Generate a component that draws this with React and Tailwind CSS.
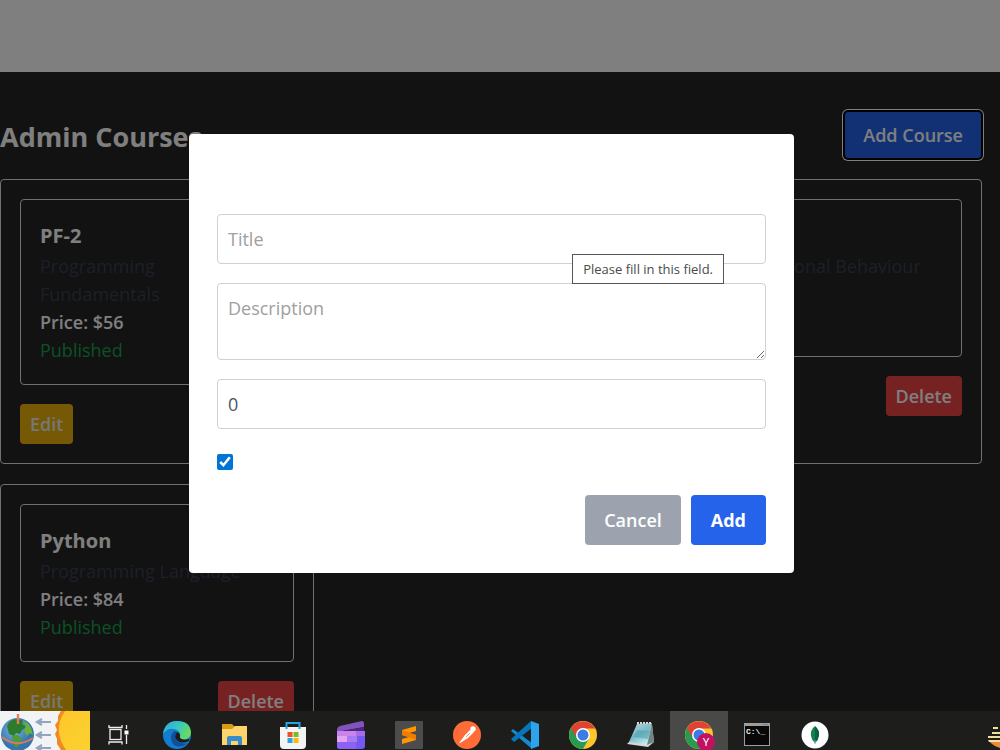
import { useState } from 'react'

const courses = [
  { id: 1, title: 'PF-2', description: 'Programming Fundamentals', price: '$56', status: 'Published' },
  { id: 2 },
  { id: 3, description: 'Organizational Behaviour' },
  { id: 4, title: 'Python', description: 'Programming Language', price: '$84', status: 'Published' },
]

function CourseCard({ course }) {
  return (
    <article className="rounded border border-[#e0e0e0] p-[19px]">
      <div className="min-h-[158px] rounded border border-[#e0e0e0] p-[19px]">
        <h2 className="h-[33px] text-[20px] leading-[33px] font-bold text-white">{course.title}</h2>
        <p className="text-[#374151]">{course.description}</p>
        {course.price && <p className="font-semibold text-white">Price: {course.price}</p>}
        {course.status && <p className="mb-px text-[#16a34a]">{course.status}</p>}
      </div>
      <div className="mt-[19px] flex justify-between">
        <button type="button" className="h-10 rounded bg-[#eab308] px-[10px] font-semibold text-[#eeeeee]">Edit</button>
        <button type="button" className="h-10 rounded bg-[#ef4444] px-[10px] font-semibold text-white">Delete</button>
      </div>
    </article>
  )
}

function AddCourseDialog() {
  const [title, setTitle] = useState('')
  const [description, setDescription] = useState('')
  const [price, setPrice] = useState('0')
  const [published, setPublished] = useState(true)

  const field = 'w-full rounded border border-[#d1d1d1] px-[10px] text-[#4b5563] placeholder:text-[#a0a0a0] outline-none'

  return (
    <form role="dialog" aria-label="Add course" className="w-full max-w-[605px] rounded bg-white p-7 pt-20" onSubmit={(e) => e.preventDefault()}>
      <div className="relative mb-[19px]">
        <input aria-label="Title" placeholder="Title" value={title} onChange={(e) => setTitle(e.target.value)} className={`${field} block h-[50px]`} />
        <div role="tooltip" className="absolute top-10 right-[42px] border border-[#555555] bg-white px-[10px] text-[13px] leading-7 whitespace-nowrap text-[#4a4a4a]">
          Please fill in this field.
        </div>
      </div>
      <textarea aria-label="Description" placeholder="Description" value={description} onChange={(e) => setDescription(e.target.value)} className={`${field} mb-[19px] block h-[77px] py-[10px]`} />
      <input aria-label="Price" inputMode="numeric" value={price} onChange={(e) => setPrice(e.target.value)} className={`${field} mb-[19px] block h-[50px]`} />
      <div className="mb-[19px] flex h-7 items-center">
        <input type="checkbox" aria-label="Published" checked={published} onChange={(e) => setPublished(e.target.checked)} className="size-4 accent-[#0075d7]" />
      </div>
      <div className="flex justify-end gap-[10px]">
        <button type="button" className="h-[50px] rounded bg-[#9ca3af] px-[19px] font-semibold text-white">Cancel</button>
        <button type="submit" className="h-[50px] rounded bg-[#2563eb] px-5 font-bold text-white">Add</button>
      </div>
    </form>
  )
}

function WeatherWidget() {
  return (
    <svg viewBox="0 0 90 39" className="h-[39px] w-[90px]">
      <defs>
        <radialGradient id="sea" cx="0.4" cy="0.35">
          <stop offset="0" stopColor="#79b8df" />
          <stop offset="1" stopColor="#3574ad" />
        </radialGradient>
        <linearGradient id="sun" x1="0" y1="0" x2="1" y2="1">
          <stop offset="0" stopColor="#ffc62b" />
          <stop offset="1" stopColor="#f9d22f" />
        </linearGradient>
      </defs>
      <rect width="90" height="39" fill="#f2f3f5" />
      <circle cx="17.5" cy="23.5" r="16.5" fill="url(#sea)" />
      <path d="M7 15 Q9 9 16 8 L23 9 22 13 26 16 22 19 20 23 16 22 14 25 9 23z" fill="#2f7b2c" />
      <path d="M22 9 Q29 12 31 17 L33 24 30 22 27 25 24 20 26 15z" fill="#6cb13c" />
      <path d="M12 25 L17 24 22 27 20 33 16 37 13 32z" fill="#4e9a3d" />
      <path d="M2 26 Q17 38 33 27" fill="none" stroke="#d87962" strokeWidth="2" />
      <path d="M18 3v10" stroke="#e77a61" strokeWidth="2.4" />
      <path d="M37 11h14M37 24h14M37 37h14M42 8l-5 3 5 3M42 21l-5 3 5 3M42 34l-5 3 5 3" fill="none" stroke="#91a5c1" strokeWidth="2.2" />
      <path d="M61 0 L58 5 58 10 55 14 57 19 55 23 57 28 57 33 61 39 H90 V0z" fill="#ef8b22" />
      <path d="M65 0 Q52 19 66 39 H90 V0z" fill="url(#sun)" />
    </svg>
  )
}

function TaskViewIcon() {
  return (
    <svg viewBox="0 0 28 28" className="size-7" fill="none" stroke="#eeeeee" strokeWidth="1.3">
      <rect x="5" y="8.5" width="11" height="10" />
      <path d="M4 4v2.500h13V4M4 23.500v-2.500h13v2.500M21.500 4v4M21.500 14v9" />
      <path d="M19.500 9.500h4v4h-4z" fill="#ffffff" stroke="none" />
    </svg>
  )
}

function EdgeIcon() {
  return (
    <svg viewBox="0 0 28 28" className="size-7">
      <defs>
        <linearGradient id="edgeTop" x1="0" y1="0" x2="1" y2="0.5">
          <stop offset="0" stopColor="#2da7dd" />
          <stop offset="0.55" stopColor="#35c7c4" />
          <stop offset="1" stopColor="#69db5c" />
        </linearGradient>
      </defs>
      <circle cx="14" cy="14" r="14" fill="#127dcf" />
      <path d="M0 13 Q2 0 14 0 Q27 0 28 11 Q28 18 21 18.500 Q15 18 17 15 Q18 11 13 8.500 Q5 6 0 13z" fill="url(#edgeTop)" />
      <path d="M11 10 Q5 17 11 24 Q17 28 25 22 Q18 24 14 19 Q11 15 14 11z" fill="#104f9a" />
      <path d="M14 11 Q10 16 15 20 Q19 23 26 20 Q27 18 26 18 Q20 20 17 17 Q18 14 16 12z" fill="#1c1c1b" />
    </svg>
  )
}

function FolderIcon() {
  return (
    <svg viewBox="0 0 28 28" className="size-7">
      <path d="M1 3h10l3 3h12v4H1z" fill="#d99b17" />
      <path d="M1 8h10l3-3h12v19H1z" fill="#fdd46b" />
      <path d="M6 24v-7q0-2 2-2h11q2 0 2 2v7h-4v-4h-7v4z" fill="#398bc9" />
    </svg>
  )
}

function StoreIcon() {
  return (
    <svg viewBox="0 0 28 28" className="size-7">
      <path d="M1 6h26v18q0 4-4 4H5q-4 0-4-4z" fill="#f4f4f4" />
      <path d="M7.500 8V2h13v6" fill="none" stroke="#24a5df" strokeWidth="2" />
      <path d="M8.500 11h5v5h-5z" fill="#e95325" />
      <path d="M14.500 11h5v5h-5z" fill="#7fb927" />
      <path d="M8.500 17h5v5h-5z" fill="#25a5e9" />
      <path d="M14.500 17h5v5h-5z" fill="#fbb913" />
    </svg>
  )
}

function ClipchampIcon() {
  return (
    <svg viewBox="0 0 28 28" className="size-7">
      <path d="M0 9 Q0 6 3 5 L25 0 Q27 0 27 3 L27 6 0 11z" fill="#8253ba" />
      <path d="M6 10 27 6v4z" fill="#4c2586" />
      <path d="M0 10h28v15q0 3-3 3H3q-3 0-3-3z" fill="#7558f0" />
      <path d="M0 10h19v5H0z" fill="#c983ed" />
      <path d="M0 15h10v6H0z" fill="#e4a2f4" />
      <path d="M10 15h10v6H10z" fill="#a77af2" />
      <path d="M0 21h19v7H3q-3 0-3-3z" fill="#8c62f2" />
      <path d="M19 10h9v5h-9z" fill="#a56de5" />
    </svg>
  )
}

function SublimeIcon() {
  return (
    <svg viewBox="0 0 28 28" className="size-7">
      <rect width="28" height="28" rx="1" fill="#4c4c4c" />
      <path d="M7 9 21 5v5l-7 2 7 2v5L7 23v-5l7-2-7-2z" fill="#ff9800" />
      <path d="M7 9v5l14 5v-5z" fill="#f17c00" />
    </svg>
  )
}

function PostmanIcon() {
  return (
    <svg viewBox="0 0 28 28" className="size-7">
      <circle cx="14" cy="14" r="14" fill="#ff6c37" />
      <circle cx="20" cy="8" r="2.700" fill="#ffffff" />
      <path d="M17 9 21 11 15 17 7 22 6 22 12 14z" fill="#ffffff" />
      <path d="M13 16 17 12" stroke="#ff9a75" strokeWidth="1" />
    </svg>
  )
}

function VsCodeIcon() {
  return (
    <svg viewBox="0 0 28 28" className="size-7">
      <path d="M2 8 21 22 21 28 0 10z" fill="#1389d0" />
      <path d="M0 18 20 0 21 7 3 21z" fill="#0874b9" />
      <path d="M20 0 28 3v22l-8 3z" fill="#2ba4ed" />
    </svg>
  )
}

function ChromeIcon({ badge }) {
  return (
    <svg viewBox="0 0 28 28" className="size-7 overflow-visible">
      <circle cx="14" cy="14" r="14" fill="#fbc62d" />
      <path d="M1.900 7 A14 14 0 0 0 14 28 L20 17.500 14 14 14 7z" fill="#279b51" />
      <path d="M14 7.500H26.100A14 14 0 0 0 1.900 7L8 17 9 11z" fill="#df4335" />
      <circle cx="14" cy="14" r="7" fill="#ffffff" />
      <circle cx="14" cy="14" r="5.500" fill="#397be7" />
      {badge && (
        <>
          <circle cx="21" cy="21" r="9" fill="#c31162" />
          <text x="21" y="25" textAnchor="middle" fontSize="11" fontFamily="Roboto, sans-serif" fill="#ffffff">{badge}</text>
        </>
      )}
    </svg>
  )
}

function NotepadIcon() {
  return (
    <svg viewBox="0 0 28 28" className="size-7">
      <defs>
        <linearGradient id="note" x1="0.2" y1="0" x2="0.7" y2="1">
          <stop offset="0" stopColor="#b5d5da" />
          <stop offset="0.5" stopColor="#75b9c6" />
          <stop offset="1" stopColor="#cfeff3" />
        </linearGradient>
      </defs>
      <path d="M25 4 27 21 21 26 0 23 2 21z" fill="#d5d8d8" />
      <path d="M10 3 25 2 20 24 2 21z" fill="url(#note)" />
      <path d="M10 9 23 10 21 18 6 16z" fill="#4b9bae" opacity="0.5" />
      <path d="M10 2h15" stroke="#d8d8d8" strokeWidth="2" strokeDasharray="2 1" />
      <path d="M25 3 27 21 20 24z" fill="#6f8587" />
    </svg>
  )
}

function TerminalIcon() {
  return (
    <svg viewBox="0 0 28 28" className="size-7">
      <path d="M1 2h26v23H1z" fill="#9c9c9c" />
      <path d="M2 5h24v19H2z" fill="#080808" />
      <path d="M20 3.500h5" stroke="#6989aa" strokeWidth="1" />
      <text x="3" y="13" fontSize="8" fontFamily="Liberation Mono, monospace" fontWeight="700" fill="#eeeeee">C:\_</text>
    </svg>
  )
}

function MongoIcon() {
  return (
    <svg viewBox="0 0 28 28" className="size-7">
      <circle cx="14" cy="14" r="13.500" fill="#ffffff" />
      <path d="M14 5 Q9 9 10 15 Q10.500 19 14 22z" fill="#13804f" />
      <path d="M14 5 Q19 9 18 15 Q17.500 19 14 22z" fill="#096044" />
      <path d="M14 19v4" stroke="#85aa96" strokeWidth="1" />
    </svg>
  )
}

function TrayIcon() {
  return (
    <svg viewBox="0 0 12 39" className="ml-auto h-[39px] w-3">
      <path d="M5 17h5M4 22h8M0 26h12" stroke="#f1df9b" strokeWidth="2" />
      <path d="M1 30h11v7Q5 35 1 30z" fill="#e98b3a" />
      <path d="M0 29h12v2H1z" fill="#f5e1a6" />
    </svg>
  )
}

const apps = [
  { name: 'Task view', icon: <TaskViewIcon /> },
  { name: 'Edge', icon: <EdgeIcon /> },
  { name: 'File Explorer', icon: <FolderIcon /> },
  { name: 'Store', icon: <StoreIcon /> },
  { name: 'Clipchamp', icon: <ClipchampIcon /> },
  { name: 'Sublime Text', icon: <SublimeIcon /> },
  { name: 'Postman', icon: <PostmanIcon /> },
  { name: 'VS Code', icon: <VsCodeIcon /> },
  { name: 'Chrome', icon: <ChromeIcon /> },
  { name: 'Notepad', icon: <NotepadIcon /> },
  { name: 'Chrome profile', icon: <ChromeIcon badge="Y" />, active: true },
  { name: 'Command Prompt', icon: <TerminalIcon /> },
  { name: 'MongoDB Compass', icon: <MongoIcon /> },
]

function Taskbar() {
  return (
    <nav aria-label="Taskbar" className="flex h-[39px] shrink-0 overflow-hidden bg-[#1d1d1b]">
      <button type="button" aria-label="Weather" className="shrink-0"><WeatherWidget /></button>
      {apps.map((app) => (
        <button key={app.name} type="button" aria-label={app.name}
          className={`flex w-[58px] shrink-0 justify-center pt-[10px] ${app.active ? 'bg-[#494947]' : ''}`}>
          {app.icon}
        </button>
      ))}
      <TrayIcon />
    </nav>
  )
}

export default function App() {
  return (
    <div className="flex h-screen flex-col overflow-hidden bg-[#242424] font-['Open_Sans','Noto_Sans',sans-serif] text-[18px] leading-7">
      <div className="relative min-h-0 flex-1 overflow-hidden">
        <header className="h-[72px] bg-white" />
        <main className="pt-[39px] pr-[18px]">
          <div className="mb-5 flex items-center justify-between">
            <h1 className="pt-1 text-[27px] leading-9 font-bold text-white">Admin Courses</h1>
            <button type="button" className="h-12 rounded border border-black bg-[#2563eb] px-[18px] font-semibold text-white shadow-[0_0_0_1px_#000000,0_0_0_2px_#ffffff]">
              Add Course
            </button>
          </div>
          <div className="grid grid-cols-3 gap-5">
            {courses.map((course) => <CourseCard key={course.id} course={course} />)}
          </div>
        </main>

        {/* Dialog */}
        <div className="absolute inset-0 flex items-center justify-center bg-black/50 pr-[17px] pb-1">
          <AddCourseDialog />
        </div>
      </div>
      <Taskbar />
    </div>
  )
}
